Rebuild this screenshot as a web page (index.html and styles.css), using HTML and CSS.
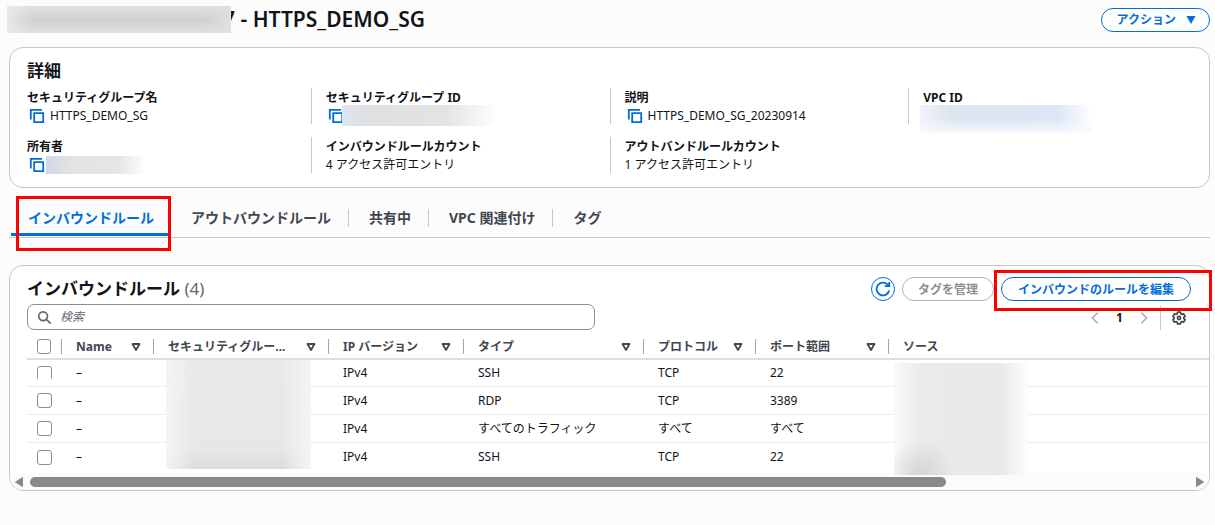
FILE: index.html
```html
<!DOCTYPE html>
<html lang="ja">
<head>
<meta charset="utf-8">
<title>HTTPS_DEMO_SG</title>
<link rel="stylesheet" href="styles.css">
</head>
<body>
<svg class="defs" aria-hidden="true">
  <symbol id="copy" viewBox="0 0 16 16"><path d="M1.800 11.500V1.800H13M5.200 5.200h9v9h-9z" fill="none" stroke="currentColor" stroke-width="1.800"/></symbol>
  <symbol id="sort" viewBox="0 0 10 10"><path d="M1.500 2h7L5 8z" fill="none" stroke="currentColor" stroke-width="1.800" stroke-linejoin="round"/></symbol>
</svg>
<main class="page">
  <header class="page-header">
    <h1 class="title"><span class="redact redact-title"></span><span class="title-text">7 - HTTPS_DEMO_SG</span></h1>
    <button class="btn btn-action" type="button">アクション
      <svg class="caret" viewBox="0 0 10 10"><path d="M0.5 1h9L5 9z" fill="currentColor"/></svg>
    </button>
  </header>

  <section class="card details">
    <h2 class="heading">詳細</h2>
    <dl class="grid">
      <div class="item"><dt>セキュリティグループ名</dt><dd><svg class="copy"><use href="#copy"/></svg>HTTPS_DEMO_SG</dd></div>
      <div class="item"><dt>セキュリティグループ ID</dt><dd><svg class="copy"><use href="#copy"/></svg><span class="redact redact-id"></span></dd></div>
      <div class="item"><dt>説明</dt><dd><svg class="copy"><use href="#copy"/></svg>HTTPS_DEMO_SG_20230914</dd></div>
      <div class="item"><dt>VPC ID</dt><dd><span class="redact redact-vpc"></span></dd></div>
      <div class="item"><dt>所有者</dt><dd><svg class="copy"><use href="#copy"/></svg><span class="redact redact-owner"></span></dd></div>
      <div class="item"><dt>インバウンドルールカウント</dt><dd>4 アクセス許可エントリ</dd></div>
      <div class="item"><dt>アウトバンドルールカウント</dt><dd>1 アクセス許可エントリ</dd></div>
    </dl>
  </section>

  <nav class="tabs">
    <a class="tab tab-active" href="#inbound"><span class="tab-label">インバウンドルール</span></a>
    <a class="tab" href="#outbound"><span class="tab-label">アウトバウンドルール</span></a>
    <a class="tab" href="#shared"><span class="tab-label">共有中</span></a>
    <a class="tab" href="#vpc"><span class="tab-label">VPC 関連付け</span></a>
    <a class="tab" href="#tags"><span class="tab-label">タグ</span></a>
    <span class="mark mark-tab"></span>
  </nav>

  <section class="card rules" id="inbound">
    <div class="rules-header">
      <h2 class="heading">インバウンドルール <span class="count">(4)</span></h2>
      <div class="actions">
        <button class="btn btn-icon" type="button" aria-label="更新">
          <svg viewBox="0 0 16 16"><path d="M14.200 9.500A6.400 6.400 0 1 1 13.400 4.600M14.200 1v4.200H9.800" fill="none" stroke="currentColor" stroke-width="1.800"/></svg>
        </button>
        <button class="btn btn-disabled" type="button" disabled>タグを管理</button>
        <button class="btn" type="button">インバウンドのルールを編集</button>
      </div>
      <span class="mark mark-edit"></span>
    </div>
    <div class="tools">
      <label class="search">
        <svg viewBox="0 0 16 16"><path d="M11.200 6.600a4.700 4.700 0 1 1-9.400 0 4.700 4.700 0 0 1 9.400 0zM10 10l4.600 4.600" fill="none" stroke="currentColor" stroke-width="1.800"/></svg>
        <input type="search" placeholder="検索" aria-label="検索">
      </label>
      <div class="pager">
        <button class="plain" type="button" aria-label="前へ"><svg viewBox="0 0 16 16"><path d="M11 2 5 8l6 6" fill="none" stroke="currentColor" stroke-width="1.600"/></svg></button>
        <span class="page-no">1</span>
        <button class="plain" type="button" aria-label="次へ"><svg viewBox="0 0 16 16"><path d="m5 2 6 6-6 6" fill="none" stroke="currentColor" stroke-width="1.600"/></svg></button>
        <button class="plain gear" type="button" aria-label="設定"><svg viewBox="0 0 16 16"><g fill="none" stroke="currentColor" stroke-width="1.900" stroke-linejoin="round"><path d="M6.400 1.200h3.200l.5 2 1.300.8 2-.7 1.600 2.800-1.500 1.300v1.200l1.500 1.300-1.600 2.800-2-.7-1.300.8-.5 2H6.400l-.5-2-1.300-.8-2 .7L1 9.900l1.500-1.300V7.400L1 6.100l1.600-2.800 2 .7 1.300-.8z"/><circle cx="8" cy="8" r="1.800"/></g></svg></button>
      </div>
    </div>
    <div class="table-wrap">
      <table class="table">
        <colgroup><col class="c-check"><col class="c-name"><col class="c-group"><col class="c-ip"><col class="c-type"><col class="c-proto"><col class="c-port"><col></colgroup>
        <thead>
          <tr>
            <th><span class="th th-check"><input type="checkbox" aria-label="すべて選択"></span></th>
            <th><span class="th">Name<svg class="sort"><use href="#sort"/></svg></span></th>
            <th><span class="th">セキュリティグルー...<svg class="sort"><use href="#sort"/></svg></span></th>
            <th><span class="th">IP バージョン<svg class="sort"><use href="#sort"/></svg></span></th>
            <th><span class="th">タイプ<svg class="sort"><use href="#sort"/></svg></span></th>
            <th><span class="th">プロトコル<svg class="sort"><use href="#sort"/></svg></span></th>
            <th><span class="th">ポート範囲<svg class="sort"><use href="#sort"/></svg></span></th>
            <th><span class="th th-last">ソース</span></th>
          </tr>
        </thead>
        <tbody>
          <tr><td><input class="cut" type="checkbox" aria-label="ルール 1"></td><td>–</td><td></td><td>IPv4</td><td>SSH</td><td>TCP</td><td>22</td><td></td></tr>
          <tr><td><input type="checkbox" aria-label="ルール 2"></td><td>–</td><td></td><td>IPv4</td><td>RDP</td><td>TCP</td><td>3389</td><td></td></tr>
          <tr><td><input type="checkbox" aria-label="ルール 3"></td><td>–</td><td></td><td>IPv4</td><td>すべてのトラフィック</td><td>すべて</td><td>すべて</td><td></td></tr>
          <tr><td><input type="checkbox" aria-label="ルール 4"></td><td>–</td><td></td><td>IPv4</td><td>SSH</td><td>TCP</td><td>22</td><td></td></tr>
        </tbody>
      </table>
      <span class="redact redact-group"></span>
      <span class="redact redact-source"></span>
    </div>
    <div class="scrollbar">
      <svg class="arrow" viewBox="0 0 8 10"><path d="M7.500.5v9L.5 5z" fill="currentColor" stroke="currentColor" stroke-linejoin="round"/></svg>
      <div class="track"><div class="thumb"></div></div>
      <svg class="arrow" viewBox="0 0 8 10"><path d="M.5.5v9l7-4.500z" fill="currentColor" stroke="currentColor" stroke-linejoin="round"/></svg>
    </div>
  </section>
</main>
</body>
</html>
```
FILE: styles.css
```css
* { box-sizing: border-box; }
body {
  margin: 0;
  background: #fcfcfd;
  color: #0f141a;
  font: 12px/18px "Noto Sans", "Noto Sans CJK JP", sans-serif;
}
h1, h2, dl, dd { margin: 0; }
button, input { font: inherit; color: inherit; margin: 0; }
.defs { display: none; }
.page { padding: 0 5px 24px 9px; }

.page-header {
  display: flex;
  justify-content: space-between;
  align-items: flex-start;
  height: 47px;
  padding-top: 6px;
}
.title { display: flex; align-items: center; margin-left: -2px; font-size: 21px; font-weight: 600; line-height: 27px; }
.title-text { margin-left: -8px; }
.redact { display: block; flex: none; }
.redact-title {
  position: relative;
  width: 224px;
  height: 27px;
  background: linear-gradient(to right, #e8e8e9, rgba(232, 232, 233, 0) 12%, rgba(224, 224, 224, 0) 88%, #e0e0e0), linear-gradient(#dfe0e1, #cfd0d1 50%, #dfe0e0);
}
.btn {
  height: 24px;
  padding: 1px 16px 0;
  border: 1px solid #006ce0;
  border-radius: 12px;
  background: #fff;
  color: #006ce0;
  font-weight: 700;
  line-height: 18px;
  white-space: nowrap;
}
.btn-action { display: flex; align-items: center; gap: 10px; margin-top: 2px; padding: 0 13px 0 15px; }
.caret { width: 10px; height: 10px; }
.btn-icon { display: flex; align-items: center; justify-content: center; width: 24px; padding: 0; }
.btn-icon svg { width: 16px; height: 16px; }
.btn-disabled { padding: 1px 15px 0; border-color: #b4b4bb; color: #8c8c94; }

.card { border: 1px solid #c6c6cd; border-radius: 14px; background: #fff; }
.heading { font-size: 17px; line-height: 24px; }
.details { padding: 11px 17px 14px; }
.grid {
  display: grid;
  grid-template-columns: repeat(4, 1fr);
  gap: 13px 15px;
  margin: 5px 0 0 -15px;
}
.item { min-height: 36px; padding-left: 14px; border-left: 1px solid #c6c6cd; }
.item:nth-child(4n + 1) { border-color: transparent; }
.item dt { height: 18px; padding-top: 1px; font-weight: 700; }
.item dd { display: flex; align-items: center; height: 18px; padding-top: 1px; }
.copy { flex: none; width: 16px; height: 16px; margin: 0 5px 0 2px; color: #006ce0; }
.redact-id { width: 156px; height: 21px; margin-left: -7px; background: linear-gradient(to right, #dce6f2, #dfe0e2 15%, #e2e3e4 65%, #fff); z-index: 1; }
.redact-vpc { width: 172px; height: 28px; margin: 7px 0 0 -3px; background: linear-gradient(rgba(246, 249, 253, 0) 50%, #f6f9fd), linear-gradient(to right, #f0f3f8, #dce5f0 18%, #dbe7f6 80%, #fff); }
.redact-owner { width: 97px; height: 18px; margin-left: -4px; background: linear-gradient(to right, #cfd9e6, #e2e3e4 25%, #e6e6e7 75%, #fbfbfb); }

.tabs { position: relative; display: flex; height: 50px; padding: 14px 0 0 2px; border-bottom: 1px solid #c6c6cd; }
.tab { display: flex; align-items: center; border-bottom: 3px solid transparent; margin-bottom: 1px; color: #424650; font-size: 14px; font-weight: 700; text-decoration: none; }
.tab-label { padding: 0 17px 0 20px; border-right: 1px solid #c6c6cd; }
.tab:nth-of-type(5) .tab-label { border: 0; }
.tab-active { border-color: #006ce0; color: #006ce0; }
.tab-active .tab-label { padding: 0 16px 0 17px; }
.mark { position: absolute; border: 3px solid #f00; }
.mark-tab { left: 7px; top: 8px; width: 155px; height: 55px; }

.rules { margin-top: 27px; }
.rules-header { position: relative; display: flex; justify-content: space-between; align-items: center; padding: 11px 18px 0 17px; }
.count { color: #656871; font-weight: 400; }
.actions { display: flex; gap: 7px; }
.mark-edit { top: 4px; right: -3px; width: 218px; height: 41px; }
.tools { display: flex; justify-content: space-between; align-items: center; padding: 3px 23px 0 17px; }
.search { display: flex; align-items: center; gap: 8px; width: 49%; height: 26px; padding: 0 9px; border: 1px solid #8c8c94; border-radius: 7px; color: #656871; }
.search svg { flex: none; width: 15px; height: 15px; }
.search input { flex: 1; min-width: 0; border: 0; padding: 0; outline: 0; background: none; }
.search input::placeholder { color: #656871; font-style: italic; }
.pager { display: flex; align-items: center; height: 24px; padding-top: 2px; }
.plain { display: flex; padding: 0; border: 0; background: none; color: #a4a4ad; }
.plain svg { width: 14px; height: 14px; }
.page-no { width: 35px; text-align: center; font-weight: 700; }
.gear { align-items: center; height: 24px; margin-left: 9px; padding-left: 11px; border-left: 1px solid #c6c6cd; color: #424650; }

.table-wrap { position: relative; margin: 2px 0 0 17px; }
.table { width: 100%; table-layout: fixed; border-collapse: separate; border-spacing: 0; }
.c-check { width: 35px; }
.c-name { width: 92px; }
.c-group { width: 175px; }
.c-ip { width: 135px; }
.c-type { width: 180px; }
.c-proto { width: 112px; }
.c-port { width: 133px; }
.table th, .table td { padding: 0; text-align: left; white-space: nowrap; }
.table th { height: 28px; padding-top: 3px; border-bottom: 2px solid #dedee3; color: #424650; }
.table td { height: 28px; padding-left: 14px; border-bottom: 1px solid #ebebf0; }
.table td:first-child { padding-left: 10px; }
.table tbody tr:first-child td { height: 27px; }
.table tbody tr:last-child td { border: 0; }
.th { display: flex; align-items: center; justify-content: space-between; height: 15px; padding: 0 12px 0 14px; border-right: 1px solid #a4a4ad; }
.th-check { padding: 0 10px; }
.th-last { border: 0; }
.sort { width: 10px; height: 10px; }
.table input { display: block; appearance: none; width: 15px; height: 15px; border: 1px solid #8c8c94; border-radius: 3px; background: #fff; }
.table .cut { clip-path: inset(0 0 2px 0); }
.redact-group { position: absolute; top: 28px; left: 139px; width: 145px; height: 109px; background: linear-gradient(to right, #f4f4f5, rgba(244, 244, 245, 0) 20%, rgba(244, 244, 245, 0) 80%, #f4f5f6), linear-gradient(#e8e9ea, #e6e7e7 80%, #dcdcdc); }
.redact-source { position: absolute; top: 31px; left: 867px; width: 134px; height: 112px; background: radial-gradient(ellipse at 20% 100%, #d4d4d4, rgba(232, 232, 232, 0) 22%), linear-gradient(to right, #f9f9f9, #e9eaea 20%, #e8e8e9 78%, #fdfdfd); }

.scrollbar { display: flex; align-items: center; gap: 7px; height: 17px; margin-top: 2px; padding: 0 5px; border-radius: 0 0 13px 13px; background: #fbfbfc; color: #898989; }
.arrow { flex: none; width: 8px; height: 10px; }
.track { flex: 1; }
.thumb { width: 79%; height: 10px; border-radius: 5px; background: #898989; }
```
